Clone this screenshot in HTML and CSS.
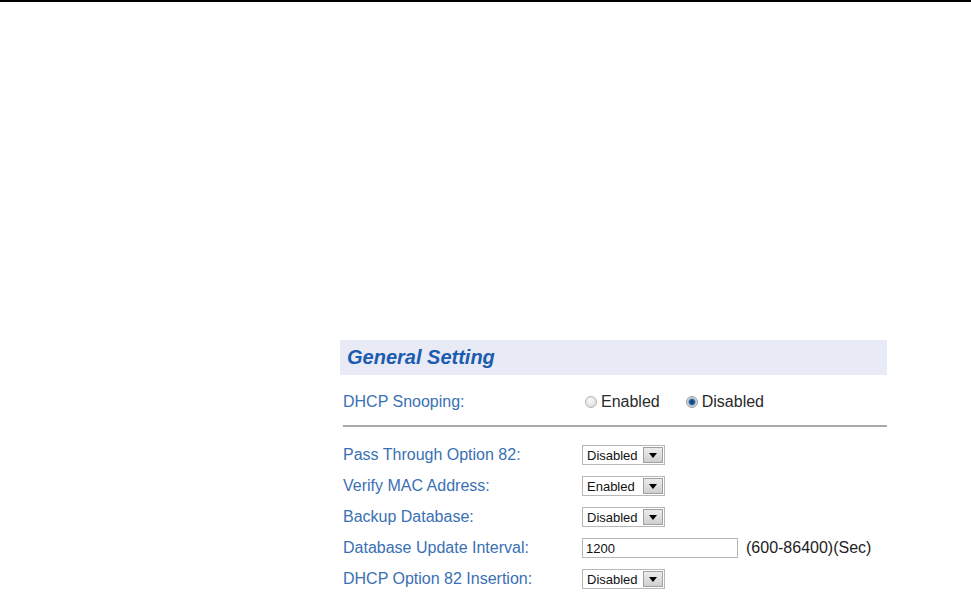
FILE: index.html
```html
<!DOCTYPE html>
<html lang="en">
<head>
    <meta charset="UTF-8">
    <title>General Setting</title>
    <link rel="stylesheet" href="styles.css">
</head>
<body>

    <div class="page-rule"></div>

    <div class="panel">
        <h2 class="panel-title">General Setting</h2>

        <!-- DHCP snooping on/off -->
        <div class="snoop-row">
            <span class="label">DHCP Snooping:</span>
            <div class="radios">
                <label class="radio"><span class="dot"></span>Enabled</label>
                <label class="radio"><span class="dot checked"></span>Disabled</label>
            </div>
        </div>

        <div class="rows">
            <div class="row">
                <span class="label">Pass Through Option 82:</span>
                <span class="select"><span class="value">Disabled</span><span class="arrow"></span></span>
            </div>
            <div class="row">
                <span class="label">Verify MAC Address:</span>
                <span class="select"><span class="value">Enabled</span><span class="arrow"></span></span>
            </div>
            <div class="row">
                <span class="label">Backup Database:</span>
                <span class="select"><span class="value">Disabled</span><span class="arrow"></span></span>
            </div>
            <div class="row">
                <span class="label">Database Update Interval:</span>
                <input class="text-input" type="text" value="1200">
                <span class="hint">(600-86400)(Sec)</span>
            </div>
            <div class="row">
                <span class="label">DHCP Option 82 Insertion:</span>
                <span class="select"><span class="value">Disabled</span><span class="arrow"></span></span>
            </div>
        </div>
    </div>

</body>
</html>
```

FILE: styles.css
```css
* {
    margin: 0;
    padding: 0;
    box-sizing: border-box;
}

body {
    font-family: 'Liberation Sans', Arial, sans-serif;
    background-color: #ffffff;
    color: #222;
}

/* thin black rule along the top */
.page-rule {
    height: 2px;
    background-color: #000;
}

.panel {
    width: 547px;
    margin: 338px 0 0 340px;
}

.panel-title {
    height: 35px;
    line-height: 35px;
    padding-left: 7px;
    background-color: #e8eaf6;
    color: #1b5cae;
    font-size: 20px;
    font-weight: bold;
    font-style: italic;
}

.label {
    width: 242px;
    padding-left: 3px;
    font-size: 16px;
    color: #3a70b4;
    white-space: nowrap;
}

/* snooping row + separator */
.snoop-row {
    display: flex;
    align-items: center;
    height: 52px;
    padding-top: 4px;
    border-bottom: 2px solid #a9a9a9;
    margin-left: 3px;
}

.snoop-row .label {
    width: 239px;
    padding-left: 0;
}

.radios {
    display: flex;
    gap: 26px;
    padding-left: 3px;
}

.radio {
    display: flex;
    align-items: center;
    font-size: 16px;
    color: #2a2a2a;
}

.dot {
    width: 12px;
    height: 12px;
    margin-right: 4px;
    border-radius: 50%;
    border: 1px solid #b4b4b4;
    background: radial-gradient(circle at 40% 35%, #fafafa, #d6d6d6);
}

.dot.checked {
    background: radial-gradient(circle at 50% 50%, #0f3e74 0, #1d5b9a 2.5px, #9bb4cc 3.5px, #e6e6e6 5px);
    border-color: #9a9a9a;
}

/* setting rows */
.rows {
    padding-top: 18px;
}

.row {
    display: flex;
    align-items: center;
    height: 20px;
    margin-bottom: 11px;
}

.select {
    display: flex;
    align-items: center;
    justify-content: space-between;
    width: 83px;
    height: 20px;
    padding: 1px 1px 1px 4px;
    border: 1px solid #b7b7b7;
    font-size: 13px;
    color: #111;
}

.arrow {
    position: relative;
    width: 20px;
    height: 16px;
    border: 1px solid #a0a0a0;
    background: linear-gradient(#ececec, #cfcfcf);
}

.arrow::after {
    content: '';
    position: absolute;
    left: 5px;
    top: 5px;
    border-left: 4px solid transparent;
    border-right: 4px solid transparent;
    border-top: 5px solid #000;
}

.text-input {
    width: 156px;
    height: 20px;
    padding-left: 3px;
    border: 1px solid #b7b7b7;
    font-family: 'Liberation Sans', Arial, sans-serif;
    font-size: 13px;
    color: #111;
    outline: none;
}

.hint {
    margin-left: 8px;
    font-size: 16px;
    color: #222;
}
```
